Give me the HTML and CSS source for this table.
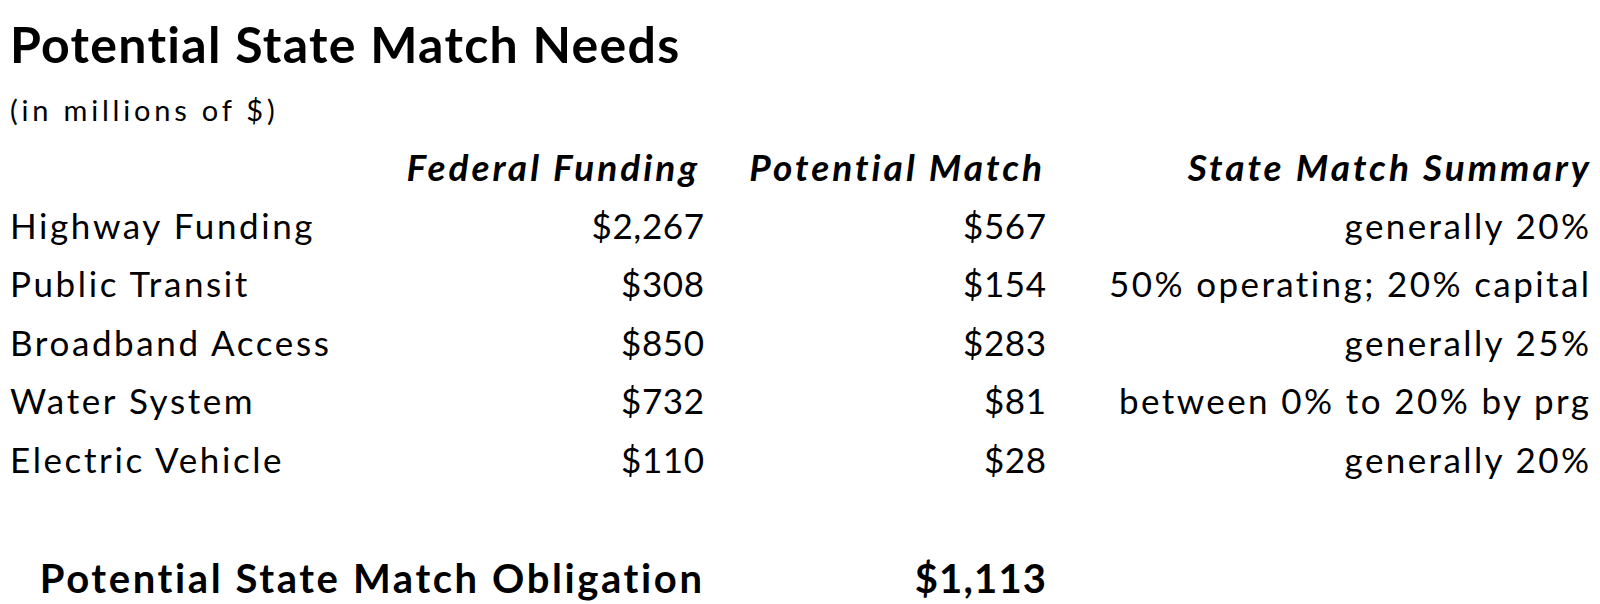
FILE: index.html
```html
<!DOCTYPE html>
<html lang="en">
<head>
<meta charset="utf-8">
<title>Potential State Match Needs</title>
<link rel="stylesheet" href="styles.css">
</head>
<body>
<main class="page">
  <h1 class="title">Potential State Match Needs</h1>
  <p class="subtitle">(in millions of $)</p>
  <div class="table">
    <div class="cell head"></div>
    <div class="cell head num col-fed">Federal Funding</div>
    <div class="cell head num col-pot">Potential Match</div>
    <div class="cell head num">State Match Summary</div>

    <div class="cell label">Highway Funding</div>
    <div class="cell num money">$2,267</div>
    <div class="cell num money">$567</div>
    <div class="cell num">generally 20%</div>

    <div class="cell label">Public Transit</div>
    <div class="cell num money">$308</div>
    <div class="cell num money">$154</div>
    <div class="cell num">50% operating; 20% capital</div>

    <div class="cell label">Broadband Access</div>
    <div class="cell num money">$850</div>
    <div class="cell num money">$283</div>
    <div class="cell num">generally 25%</div>

    <div class="cell label">Water System</div>
    <div class="cell num money">$732</div>
    <div class="cell num money">$81</div>
    <div class="cell num">between 0% to 20% by prg</div>

    <div class="cell label">Electric Vehicle</div>
    <div class="cell num money">$110</div>
    <div class="cell num money">$28</div>
    <div class="cell num">generally 20%</div>

    <div class="cell total-label">Potential State Match Obligation</div>
    <div class="cell total num">$1,113</div>
  </div>
</main>
</body>
</html>
```

FILE: styles.css
```css
html, body {
  margin: 0;
  padding: 0;
  background: #ffffff;
}

body {
  font-family: Lato, "Liberation Sans", sans-serif;
  color: #000000;
  width: 1600px;
  height: 604px;
  overflow: hidden;
}

.page {
  padding: 12px 11px 0 10px;
}

.title {
  margin: 0;
  font-size: 50px;
  font-weight: 700;
  line-height: 64px;
  height: 64px;
  letter-spacing: 1.3px;
}

.subtitle {
  margin: 14px 0 0 0;
  font-size: 29px;
  line-height: 40px;
  height: 40px;
  letter-spacing: 3.8px;
}

.table {
  margin-top: 6px;
  display: grid;
  grid-template-columns: 300px 394px 342px 543px;
  grid-template-rows: 60px repeat(5, 58.5px) 60.5px 58px;
}

.cell {
  font-size: 35px;
  line-height: 1;
  display: flex;
  align-items: center;
  letter-spacing: 2.6px;
  white-space: nowrap;
}

.num {
  justify-content: flex-end;
  letter-spacing: 2.4px;
  margin-right: -2.4px;
}

.money {
  letter-spacing: 0.6px;
  margin-right: -0.6px;
}

.head {
  font-weight: 700;
  font-style: italic;
  font-size: 37px;
  letter-spacing: 3px;
  margin-right: -3px;
}

.col-fed {
  margin-right: 4px;
}

.col-pot {
  margin-right: 1px;
}

.total-label {
  grid-row: 8;
  grid-column: 1 / 3;
  justify-content: flex-end;
  font-weight: 700;
  font-size: 40px;
  letter-spacing: 2.6px;
  margin-right: -0.6px;
}

.total {
  grid-row: 8;
  grid-column: 3;
  font-weight: 700;
  font-size: 40px;
  letter-spacing: 1.2px;
  margin-right: -1.2px;
}
```
